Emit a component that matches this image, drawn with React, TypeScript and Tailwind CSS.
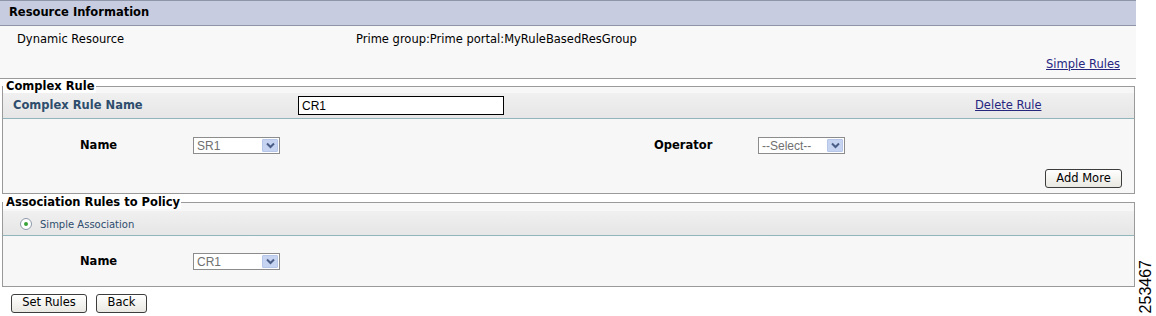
import React from "react";

const Chevron = () => (
  <svg width="9" height="7" viewBox="0 0 9 7">
    <path d="M1 1.5 L4.5 5 L8 1.5" fill="none" stroke="#4a5d86" strokeWidth="2" />
  </svg>
);

const Select = ({ value }: { value: string }) => (
  <div className="flex items-center justify-between w-[87px] h-[17px] border border-[#8c8c8c] bg-white pl-[3px] pr-[1px]">
    <span className="font-['Liberation_Sans'] text-[12px] leading-none text-[#707070]">{value}</span>
    <span className="flex items-center justify-center w-[16px] h-[13px] bg-[#c6d4f1] border border-[#b6c6e8] rounded-[1px]">
      <Chevron />
    </span>
  </div>
);

const Btn = ({ label, w }: { label: string; w: string }) => (
  <button
    className={`${w} h-[19px] rounded-[3px] border border-[#3d3d3d] bg-gradient-to-b from-[#ffffff] to-[#e9e8e2] text-[11.5px] text-black leading-none`}
  >
    {label}
  </button>
);

export default function App() {
  return (
    <div className="w-[1156px] h-[316px] bg-white flex font-['DejaVu_Sans',sans-serif] text-[11.5px] text-black overflow-hidden">
      <div className="w-[1136px] flex flex-col">
        {/* Resource Information */}
        <div className="h-[26px] border-t border-b border-[#8e95a8] bg-[#c7cce0] flex items-center pl-[9px] font-bold">
          Resource Information
        </div>
        <div className="h-[53px] bg-[#f8f8f8] border-b border-[#9a9a9a] flex flex-col">
          <div className="flex pt-[5px] leading-[16px]">
            <span className="ml-[17px] w-[339px]">Dynamic Resource</span>
            <span>Prime group:Prime portal:MyRuleBasedResGroup</span>
          </div>
          <div className="flex justify-end pr-[16px] mt-[9px] leading-[16px]">
            <a className="underline text-[#26267f]">Simple Rules</a>
          </div>
        </div>

        {/* Complex Rule */}
        <fieldset className="ml-[2px] w-[1133px] border border-[#9a9a9a] bg-[#f7f7f7] p-0 m-0">
          <legend className="pl-[3px] pr-[1px] font-bold bg-white leading-[14px]">Complex Rule</legend>
          <div className="h-[26px] flex items-center bg-gradient-to-b from-[#f0f0f0] to-[#e6e6e6] border-b border-[#92b4bb]">
            <span className="ml-[10px] w-[285px] font-bold text-[#2e4d6d]">Complex Rule Name</span>
            <div className="w-[206px] h-[19px] border border-black bg-white flex items-center pl-[3px] font-['Liberation_Sans'] text-[12px]">
              CR1
            </div>
            <a className="ml-[471px] underline text-[#26267f]">Delete Rule</a>
          </div>
          <div className="flex items-center pt-[18px]">
            <span className="ml-[77px] w-[113px] font-bold">Name</span>
            <Select value="SR1" />
            <span className="ml-[374px] w-[104px] font-bold">Operator</span>
            <Select value="--Select--" />
          </div>
          <div className="flex justify-end pr-[12px] pt-[15px] pb-[5px]">
            <Btn label="Add More" w="w-[77px]" />
          </div>
        </fieldset>

        {/* Association Rules to Policy */}
        <fieldset className="ml-[2px] w-[1133px] border border-[#9a9a9a] bg-[#f7f7f7] p-0 m-0 mt-[1px]">
          <legend className="pl-[3px] pr-[1px] font-bold bg-white leading-[14px]">Association Rules to Policy</legend>
          <div className="mt-[2px] h-[25px] flex items-center bg-gradient-to-b from-[#f0f0f0] to-[#e6e6e6] border-b border-[#92b4bb]">
            <span className="ml-[17px] mt-[1px] w-[12px] h-[12px] rounded-full border border-[#8d9aa8] bg-white flex items-center justify-center">
              <span className="w-[4px] h-[4px] rounded-full bg-[#3aa23a]" />
            </span>
            <span className="ml-[8px] mt-[2px] text-[10px] text-[#2e4d6d]">Simple Association</span>
          </div>
          <div className="flex items-center pt-[17px] pb-[15px]">
            <span className="ml-[77px] w-[113px] font-bold">Name</span>
            <Select value="CR1" />
          </div>
        </fieldset>

        <div className="flex gap-[9px] pl-[11px] pt-[7px]">
          <Btn label="Set Rules" w="w-[76px]" />
          <Btn label="Back" w="w-[51px]" />
        </div>
      </div>
      <div className="flex-1 flex items-end pb-[3px] pl-[2px]">
        <span className="font-['Liberation_Sans'] text-[16px] leading-none [writing-mode:vertical-rl] rotate-180">
          253467
        </span>
      </div>
    </div>
  );
}
